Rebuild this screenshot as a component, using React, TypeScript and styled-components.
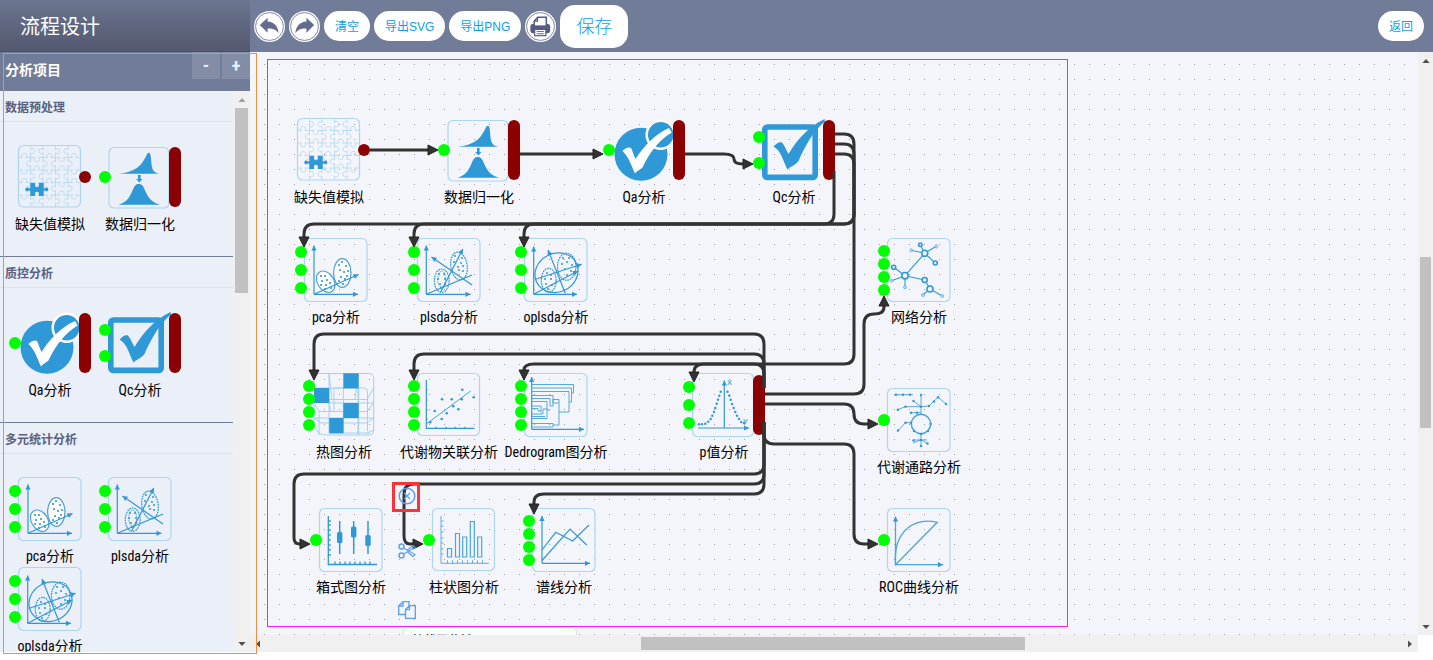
import React from 'react';
import styled, { createGlobalStyle } from 'styled-components';

const BLUE = '#2f98d6';
const PALE = '#acd6ef';
const SLATE = '#717c98';

const GlobalStyle = createGlobalStyle`
  * { box-sizing: border-box; }
  body {
    margin: 0;
    background: #fff;
    font-family: 'Roboto Condensed', Roboto, 'Noto Sans CJK SC', sans-serif;
    font-size: 14px;
    color: #000;
    overflow: hidden;
  }
  button { font-family: inherit; cursor: pointer; }
`;

const Page = styled.div`
  position: relative;
  display: flex;
  flex-direction: column;
  height: 100vh;
  padding-bottom: 8px;
`;

/* ---------- header ---------- */

const Header = styled.header`
  display: flex;
  flex: none;
  height: 52px;
  background: ${SLATE};
`;

const Brand = styled.h1`
  flex: none;
  width: 250px;
  margin: 0;
  padding-left: 20px;
  font-size: 20px;
  font-weight: 400;
  line-height: 54px;
  color: #fff;
  background: linear-gradient(#6b758f, #535970);
  border-bottom: 1px solid #4a5068;
`;

const Toolbar = styled.div`
  display: flex;
  flex: 1;
  align-items: center;
  gap: 4px;
  padding: 0 9px 0 4px;
`;

const Spacer = styled.div`
  flex: 1;
`;

const PillButton = styled.button<{ $large?: boolean }>`
  height: ${p => (p.$large ? 43 : 30)}px;
  padding: 0 ${p => (p.$large ? 16 : 11)}px 2px;
  border: 0;
  border-radius: 15px;
  background: #fff;
  color: #0aa0f0;
  font-family: 'Liberation Sans', 'Noto Sans CJK SC', sans-serif;
  font-size: ${p => (p.$large ? 18 : 12)}px;
  font-weight: ${p => (p.$large ? 300 : 400)};
  white-space: nowrap;
`;

const RoundButton = styled.button`
  display: flex;
  width: 31px;
  height: 31px;
  padding: 0;
  border: 0;
  background: none;
`;

/* ---------- sidebar ---------- */

const Body = styled.div`
  display: flex;
  flex: 1;
  min-height: 0;
`;

const Sidebar = styled.aside`
  display: flex;
  flex: none;
  flex-direction: column;
  width: 250px;
  background: #ebeff8;
`;

const PanelHead = styled.div`
  display: flex;
  flex: none;
  align-items: flex-start;
  gap: 2px;
  height: 39px;
  padding-left: 5px;
  background: ${SLATE};
`;

const PanelTitle = styled.h2`
  flex: 1;
  margin: 0;
  font-size: 14px;
  font-weight: 700;
  line-height: 37px;
  color: #fff;
`;

const FoldButton = styled.button`
  width: 28px;
  height: 27px;
  padding: 0;
  border: 0;
  background: #838da6;
  color: #e3f1fb;
  font-size: 18px;
  font-weight: 700;
  line-height: 27px;
`;

const PanelBody = styled.div`
  display: flex;
  flex: 1;
  min-height: 0;
`;

const SectionList = styled.div`
  flex: 1;
  overflow: hidden;
`;

const Section = styled.section`
  padding-bottom: 19px;
  border-bottom: 1px solid ${SLATE};
`;

const SectionTitle = styled.h3`
  margin: 0;
  padding: 4px 0 0 5px;
  border-bottom: 1px solid #dce3f0;
  font-size: 12px;
  font-weight: 700;
  line-height: 26px;
  color: #5a6080;
`;

const Tiles = styled.div`
  display: grid;
  grid-template-columns: repeat(2, 90px);
  grid-auto-rows: 90px;
  padding: 23px 0 2px 15px;
`;

const SidebarOutline = styled.div`
  position: absolute;
  top: 53px;
  left: 3px;
  bottom: 6px;
  width: 254px;
  border: 1px solid #f58a42;
  pointer-events: none;
`;

/* ---------- scrollbars ---------- */

const Track = styled.div<{ $axis: 'x' | 'y'; $size: number }>`
  display: flex;
  flex: none;
  flex-direction: ${p => (p.$axis === 'x' ? 'row' : 'column')};
  align-items: center;
  justify-content: space-between;
  ${p => (p.$axis === 'x' ? 'height' : 'width')}: ${p => p.$size}px;
  padding: ${p => (p.$axis === 'x' ? '0 4px' : '5px 0 4px')};
  background: #f0f0f0;
`;

const Rail = styled.div<{ $axis: 'x' | 'y' }>`
  display: flex;
  flex: 1;
  flex-direction: ${p => (p.$axis === 'x' ? 'row' : 'column')};
  align-self: stretch;
  margin: ${p => (p.$axis === 'x' ? '2px 7px 2px 8px' : '4px 2px')};
`;

const Before = styled.div<{ $grow: number }>`
  flex: ${p => p.$grow} 1 0;
`;

const Thumb = styled.div<{ $grow: number }>`
  flex: ${p => p.$grow} 1 0;
  background: #c1c1c1;
`;

type Dir = 'up' | 'down' | 'left' | 'right';
const turns: Record<Dir, number> = { up: 0, right: 90, down: 180, left: 270 };

const Caret = ({ dir, color = '#505050' }: { dir: Dir; color?: string }) => (
  <svg width="8" height="8" viewBox="0 0 8 8">
    <path d="M4 2 L7.6 6 H0.4 Z" fill={color} transform={`rotate(${turns[dir]} 4 4)`} />
  </svg>
);

type ScrollProps = { axis: 'x' | 'y'; size: number; parts: [number, number, number]; startColor?: string };

const Scrollbar = ({ axis, size, parts, startColor }: ScrollProps) => (
  <Track $axis={axis} $size={size}>
    <Caret dir={axis === 'x' ? 'left' : 'up'} color={startColor} />
    <Rail $axis={axis}>
      <Before $grow={parts[0]} />
      <Thumb $grow={parts[1]} />
      <Before $grow={parts[2]} />
    </Rail>
    <Caret dir={axis === 'x' ? 'right' : 'down'} />
  </Track>
);

/* ---------- canvas ---------- */

const Workspace = styled.main`
  display: flex;
  flex: 1;
  flex-direction: column;
  min-width: 0;
`;

const WorkRow = styled.div`
  display: flex;
  flex: 1;
  min-height: 0;
`;

const Canvas = styled.div`
  position: relative;
  flex: 1;
  min-width: 0;
  overflow: hidden;
  background: #f4f5fb;
`;

const Layer = styled.svg`
  position: absolute;
  inset: 0;
  width: 100%;
  height: 100%;
  pointer-events: none;
`;

const Paper = styled.div`
  position: absolute;
  top: 7px;
  left: 17px;
  width: 801px;
  height: 568px;
  border: 1px solid #ee22ee;
  pointer-events: none;
`;

const Placed = styled.div<{ $x: number; $y: number }>`
  position: absolute;
  left: ${p => p.$x}px;
  top: ${p => p.$y}px;
`;

const HoverCard = styled.div`
  position: absolute;
  top: 575px;
  left: 153px;
  width: 174px;
  padding: 3px 8px;
  border: 1px solid #dadfeb;
  border-radius: 5px;
  background: #fbfdff;
  font-size: 12px;
  font-weight: 700;
  line-height: 20px;
  color: #333a66;
`;

const LinkTool = styled.button<{ $y: number }>`
  position: absolute;
  left: 147px;
  top: ${p => p.$y}px;
  width: 20px;
  height: 20px;
  padding: 0;
  border: 0;
  background: none;
`;

const Marker = styled.div`
  position: absolute;
  left: 142px;
  top: 430px;
  width: 28px;
  height: 30px;
  border: 3px solid #fb3238;
  pointer-events: none;
`;

const HFoot = styled.div`
  display: flex;
  flex: none;
  height: 17px;
`;

const HFootBar = styled.div`
  flex: 1;
`;

const HCorner = styled.div`
  width: 15px;
`;

/* ---------- nodes ---------- */

const NodeBox = styled.div`
  position: relative;
  display: flex;
  flex-direction: column;
  align-items: center;
  width: 70px;
`;

const Art = styled.svg`
  display: block;
  flex: none;
  width: 64px;
  height: 64px;
  overflow: visible;
`;

const NodeLabel = styled.span`
  margin-top: 5px;
  line-height: 20px;
  white-space: nowrap;
`;

const gaps = [0, 0, 14, 6, 1];

const InPorts = styled.div<{ $count: number }>`
  position: absolute;
  top: 0;
  left: -6px;
  display: flex;
  flex-direction: column;
  justify-content: center;
  gap: ${p => gaps[p.$count]}px;
  height: 64px;
`;

const Port = styled.i<{ $out?: boolean }>`
  width: 12px;
  height: 12px;
  border-radius: 6px;
  background: ${p => (p.$out ? '#8b0000' : '#00ff00')};
`;

const OutPorts = styled.div`
  position: absolute;
  top: 0;
  right: -6px;
  display: flex;
  align-items: center;
  height: 64px;
`;

const PortStack = styled.i`
  width: 12px;
  height: 60px;
  border-radius: 6px;
  background: #8b0000;
`;

const Frame = ({ x = 0.5, y = 0.5, w = 62.5, h = 63 }) => (
  <rect x={x} y={y} width={w} height={h} rx="5" fill="none" stroke={PALE} strokeWidth="1.2" />
);

/* Line that ends in a filled arrow head at (x2, y2). */
const Arrow = ({ x1, y1, x2, y2 }: { x1: number; y1: number; x2: number; y2: number }) => {
  const a = (Math.atan2(y2 - y1, x2 - x1) * 180) / Math.PI;
  return (
    <g>
      <path d={`M${x1} ${y1}L${x2} ${y2}`} />
      <path d="M0 0L-5 -2.6V2.6Z" fill={BLUE} stroke="none" transform={`translate(${x2} ${y2}) rotate(${a})`} />
    </g>
  );
};

const Dots = ({ pts, r = 1 }: { pts: number[][]; r?: number }) => (
  <g fill={BLUE} stroke="none">
    {pts.map(([x, y], i) => <circle key={i} cx={x} cy={y} r={r} />)}
  </g>
);

/* Jigsaw seams: straight cuts with one round knob per piece edge. */
const puzzlePath = () => {
  const s = 12.5;
  const size = 62;
  let d = '';
  for (let k = 1; k < 5; k++) {
    for (let j = 0; j < 5; j++) {
      const v = (k + j) % 2 ? 1 : -1;
      const c = k * s;
      const a = j * s;
      const end = Math.min(a + s, size);
      d += `M${c} ${a}V${a + 4.6}c${v} -1.6 ${v * 4} -1.4 ${v * 4} 1.6s${-v * 3} 3.2 ${-v * 4} 1.6V${end}`;
      d += `M${a} ${c}H${a + 4.6}c-1.6 ${-v} -1.4 ${-v * 4} 1.6 ${-v * 4}s3.2 ${v * 3} 1.6 ${v * 4}H${end}`;
    }
  }
  return d;
};

const spots1 = [[35, 27], [38, 24], [42, 28], [36, 32], [40, 34], [44, 33], [37, 39], [41, 41], [35, 43], [43, 38], [39, 46]];
const spots2 = [[17, 38], [21, 38], [18, 43], [23, 42], [17, 47], [26, 45], [22, 47], [21, 51], [27, 50]];

const art: Record<string, React.ReactNode> = {
  puzzle: (
    <g fill="none">
      <Frame w={62} h={61.5} />
      <path d={puzzlePath()} stroke="#b3d9ef" strokeWidth="0.9" />
      <path
        d="M12.300 38H17.300C16.500 41 17.300 42.200 19 42.200S21.500 41 20.700 38H25.700V43.300H27.200C28 42 30.300 42.400 30.300 44.400S28 46.800 27.200 45.600H25.700V51H20.700C21.500 48 20.700 46.800 19 46.800S16.500 48 17.300 51H12.300V45.600H10.600C9.800 46.800 7.300 46.400 7.300 44.400S9.800 42 10.600 43.300H12.300Z"
        fill={BLUE}
      />
    </g>
  ),
  normalize: (
    <g fill={BLUE}>
      <Frame x={1} y={2.5} w={60} h={60.5} />
      <path d="M10.5 28.8C27 27 33 21 37.4 12.5C39 9 39.8 7.7 41 7.7C42.6 7.9 43 12 43.4 18C43.9 24 45 27.5 51.5 28.8Z" />
      <path d="M30 30h2.6v4h1.8L31.3 37.5 28.2 34H30Z" />
      <path d="M10.5 59.8C20 57 22.6 50 25 44.500C26.600 40.500 28 39 30.600 39C33.500 39 35 40.500 36.600 44.500C39 50 42 57 52 59.800Z" />
    </g>
  ),
  qa: (
    <g>
      <circle cx="29" cy="36.300" r="26.500" fill={BLUE} />
      <circle cx="48.700" cy="16.700" r="14" fill={BLUE} stroke="#fff" strokeWidth="2.500" />
      <path d="M10.500 33C13 30 17 28.500 19 30C21 34 22 38 23.500 41C31 29 43 16 57 10L59.800 14.500C47 22 38 34 30.500 49.500C28.500 51.500 26 52 23 55.500C19.500 48 17 39 10.500 33Z" fill="#fff" />
    </g>
  ),
  qc: (
    <g>
      <rect x="2.800" y="9" width="50.400" height="50.400" rx="2.500" fill="none" stroke={BLUE} strokeWidth="5.600" />
      <path d="M11.500 28.500C15 24.500 18 23.500 20 24.500C23 28 24 32 26.500 36C35 22 47 8 62.500 1L63 3.500C52 12 43 28 36.500 43C33 47.500 29 48 25.500 51.500C21 43 19.500 33 11.500 28.500Z" fill={BLUE} />
    </g>
  ),
  pca: (
    <g fill="none" stroke={BLUE} strokeWidth="1.200">
      <Frame />
      <ellipse cx="38.300" cy="35" rx="8.700" ry="14.300" fill="#fff" stroke="#4f9fd6" />
      <ellipse cx="21.700" cy="43.700" rx="8.200" ry="11.500" fill="#fff" stroke="#4f9fd6" transform="rotate(-32 21.700 43.700)" />
      <Dots pts={spots1} r={1.1} />
      <Dots pts={spots2} r={1.1} />
      <Arrow x1={10} y1={56.3} x2={10} y2={7.5} />
      <Arrow x1={10} y1={56.3} x2={54} y2={56.3} />
      <Arrow x1={10} y1={56.3} x2={54.5} y2={36.5} />
    </g>
  ),
  plsda: (
    <g fill="none" stroke={BLUE} strokeWidth="1.200">
      <Frame />
      <g strokeDasharray="1.800 0.800">
        <ellipse cx="24.700" cy="42.700" rx="7.400" ry="11.700" />
        <ellipse cx="42" cy="28" rx="8.200" ry="14" transform="rotate(-8 42 28)" />
        <ellipse cx="24.700" cy="41" rx="4" ry="8" opacity="0.600" />
      </g>
      <Dots pts={[[22, 36], [27, 36], [21, 41], [28, 41], [23, 46], [28, 46], [24, 50], [37, 24], [44, 25], [41, 29], [46, 28], [42, 32], [46, 33], [38, 18], [45, 20]]} />
      <Arrow x1={9.3} y1={56.3} x2={9.3} y2={7.5} />
      <Arrow x1={9.3} y1={56.3} x2={53.5} y2={56.3} />
      <path d="M9.300 56.300L55 37" />
      <Arrow x1={55} y1={47} x2={14.5} y2={19} />
      <Arrow x1={23.7} y1={54} x2={45.8} y2={11} />
    </g>
  ),
  oplsda: (
    <g fill="none" stroke={BLUE} strokeWidth="1.200">
      <Frame />
      <ellipse cx="32.500" cy="34.700" rx="22" ry="19.300" transform="rotate(-25 32.500 34.700)" />
      <g strokeDasharray="1.800 0.800">
        <ellipse cx="24.700" cy="42.300" rx="7.400" ry="12" />
        <ellipse cx="42.700" cy="28.700" rx="9.200" ry="13.500" />
      </g>
      <Dots pts={[[23, 35], [27, 37], [21, 41], [27, 41], [22, 46], [28, 47], [24, 51], [39, 20], [45, 20], [38, 26], [43, 24], [48, 27], [41, 31], [47, 33], [43, 37]]} />
      <Arrow x1={9.7} y1={56.3} x2={9.7} y2={8.5} />
      <Arrow x1={9.7} y1={56.3} x2={53} y2={56.3} />
      <Arrow x1={41.3} y1={55.3} x2={24} y2={12} />
      <Arrow x1={11.3} y1={41.3} x2={57.7} y2={26.3} />
      <Arrow x1={9.7} y1={56.3} x2={54} y2={33} />
    </g>
  ),
  heat: (
    <g fill="none" stroke="#9dcdec" strokeWidth="0.900">
      <path d="M2 15V5q0-4.500 4.500-4.500H57q4.700 0 4.700 4.500V57q0 5-4.700 5H14q-6 0-8-3L2 53V30" />
      <path d="M17 .5V60.500M31.300 15V60M46.700 15V62M2 15H46.700M17 30H61.700M2 45H61.700M17 60H58" />
      <path d="M7 38V62M22 15V38M46 15V62M55.500 19V58M17 26.500H55M7 38.500H55M9 50H55M22 15H52q3.500 0 3.500 4" />
      <path d="M17 0L20 26.500M46.700 0L43 26.500M61.700 15L55 26.500M61.700 30L55 38.500M61.700 45L55 50M2 30L7 38.500M2 45L9 50M17 30L19 38M46.700 30L43 38M61.700 57L55 60" />
      <g fill={BLUE} stroke="none">
        <rect x="31.300" y="0.300" width="15.400" height="15" />
        <rect x="2" y="15" width="15.200" height="15" />
        <rect x="31.300" y="30" width="15.400" height="15" />
        <rect x="17.200" y="45" width="14.300" height="15.300" />
      </g>
    </g>
  ),
  scatter: (
    <g fill="none" stroke={BLUE} strokeWidth="1.200">
      <Frame w={62} h={62} />
      <path d="M9.300 7V55.300H57.500M9.300 17h1.500M9.300 27h1.500M9.300 37h1.500M9.300 46h1.500M19 55.300v-1.500M29 55.300v-1.500M38 55.300v-1.500M48 55.300v-1.500" />
      <path d="M10 50.500L53.700 18" strokeWidth="0.900" />
      <Dots r={1.300} pts={[[45.3, 16.7], [56.7, 24.3], [25, 26.3], [34.7, 26.3], [44.7, 26.3], [36.3, 33.3], [41.3, 36.3], [17.7, 38], [29.7, 40.3], [24.7, 46], [13.3, 49.3]]} />
    </g>
  ),
  dendro: (
    <g fill="none" stroke={BLUE} strokeWidth="1.200">
      <Frame />
      <Arrow x1={7.7} y1={56.3} x2={7.7} y2={4} />
      <Arrow x1={7.7} y1={56.3} x2={60} y2={56.3} />
      <g strokeWidth="1" stroke="#55aade">
        <path d="M8 11.500H49.500V20H47.500M8 15H47.500V29H45M8 18.500H45V39H35M8 22.500H29V30H35M35 26.500V52M8 25.500H26V33H29V26.500H35M8 28.500H23V37H26M8 33H17V39.500M8 35.500H14V38H17M8 41H19V36H23V45.500H8M8 43.500H21M8 50.500H29V54H8M29 52H35" />
      </g>
    </g>
  ),
  pvalue: (
    <g fill="none" stroke={BLUE} strokeWidth="1.200">
      <Frame w={61} />
      <Arrow x1={32.3} y1={55} x2={32.3} y2={7.5} />
      <Arrow x1={6} y1={55} x2={57} y2={55} />
      <Dots r={1.200} pts={[[7, 51.3], [10, 51.3], [13.3, 50.7], [16.3, 48.7], [18.7, 46], [20.3, 42.7], [22, 39], [23.3, 35], [24.7, 30.7], [26, 26.7], [27.3, 22.7], [28.7, 18.7], [35.5, 18.7], [37.3, 22.7], [38.7, 26.7], [40, 31], [41.7, 35], [43.3, 39], [45, 42.7], [47, 46], [49.3, 49], [52, 50]]} />
      <g fill={BLUE} stroke="none" fontSize="8" fontFamily="Roboto, sans-serif">
        <text x="35" y="12">X</text>
        <text x="51" y="51">Y</text>
      </g>
    </g>
  ),
  network: (
    <g fill="none" stroke={BLUE} strokeWidth="1.100">
      <Frame />
      <path d="M37.700 15.300L33.300 6.700M37.700 15.300L24.300 12.300M37.700 15.300L49.300 8.300M37.700 15.300L48.300 25M37.700 15.300L18 37.700M18 37.700L6.700 29.300M18 37.700L4.700 42.700M18 37.700V49.300M18 37.700L37.700 42L43 51L36 57M43 51L55.300 58" />
      <g fill="#f4f5fb" strokeWidth="1.600">
        <circle cx="37.700" cy="15.300" r="3" />
        <circle cx="18" cy="37.700" r="3.200" />
        <circle cx="43" cy="51" r="3" />
        <circle cx="37.700" cy="42" r="2.500" />
        <circle cx="48.300" cy="25" r="2" />
        <circle cx="6.700" cy="29.300" r="2" />
        <circle cx="33.300" cy="6.700" r="1.700" />
      </g>
      <g fill="#b9dcf2" stroke="#69b4e2" strokeWidth="0.900">
        <circle cx="24.300" cy="12.300" r="1.500" />
        <circle cx="49.300" cy="8.300" r="1.500" />
        <circle cx="4.700" cy="42.700" r="1.300" />
        <circle cx="18" cy="49.300" r="1.500" />
        <circle cx="36" cy="57" r="1.500" />
        <circle cx="55.300" cy="58" r="1.500" />
      </g>
    </g>
  ),
  pathway: (
    <g fill="none" stroke="#46a2da" strokeWidth="1">
      <Frame />
      <circle cx="34" cy="36" r="9.700" strokeWidth="1.400" />
      <path d="M7 6.700H26M34 7V26.300M9.700 22.300L18 18.700H34L42 18L51 9.300L60.300 17M26.500 13L34 18.700M24 24.700H34M10.300 43.500L18.500 34.700H24.700M34 46V59M34 51.500L26 55M34 51.500L41 56M26 52H40" strokeWidth="0.900" />
      <Dots r={1.200} pts={[[9, 6.7], [16, 6.7], [23, 6.700], [34, 7], [26.500, 13], [11, 21.700], [18.500, 18.700], [24, 24.700], [30, 24.700], [51, 9.300], [59, 16], [42, 18], [47, 13.500], [11, 42.500], [18.500, 34.700], [24, 34.700], [34, 18.700], [26.500, 52.500], [34, 58], [40.500, 55.500], [43.700, 36], [27, 43], [41, 43], [34, 46], [34, 52]]} />
    </g>
  ),
  box: (
    <g fill="none" stroke={BLUE} strokeWidth="1.300">
      <Frame />
      <path d="M9.300 8V56.500H58M9.300 13h2.500M9.300 17h2.500M9.300 22h2.500M9.300 27h2.500M9.300 32h2.500M9.300 37h2.500M9.300 42h2.500M9.300 47h2.500M16 56.500v-3M21 56.500v-3M26 56.500v-3M31 56.500v-3M36 56.500v-3M41 56.500v-3M46 56.500v-3M51 56.500v-3" />
      <path d="M20.700 13V46M34.700 13V46M49 13V46" strokeWidth="1.500" />
      <g fill={BLUE} stroke="none">
        <rect x="18" y="24" width="5.400" height="11" rx="1.500" />
        <rect x="32" y="18.500" width="5.400" height="11" rx="1.500" />
        <rect x="46.300" y="27" width="5.400" height="11" rx="1.500" />
      </g>
    </g>
  ),
  bar: (
    <g fill="none" stroke="#4ba6dc" strokeWidth="1.200">
      <Frame w={62} h={62} />
      <path d="M9 8V55.300H57M9 13h2.500M9 18h2.500M9 24h2.500M9 30h2.500M9 35h2.500M9 41h2.500M9 46h2.500M15.500 55.300v-3M20.500 55.300v-3M25.500 55.300v-3M30.500 55.300v-3M35.500 55.300v-3M40.500 55.300v-3M45.500 55.300v-3M50.500 55.300v-3" strokeWidth="0.900" />
      <path d="M15.500 49V40.500h4V49ZM23.500 49V25.500h4V49ZM30.700 49V29h4V49ZM38.300 49V13.500h4V49ZM45.700 49V29h4V49Z" />
    </g>
  ),
  line: (
    <g fill="none" stroke={BLUE} strokeWidth="1.200">
      <Frame />
      <Arrow x1={10} y1={55.3} x2={10} y2={8} />
      <Arrow x1={10} y1={55.3} x2={58} y2={55.3} />
      <path d="M10 42L23.700 24.300L40.700 33L57 17M10 52.500L38 21L54.700 37" />
    </g>
  ),
  roc: (
    <g fill="none" stroke="#4ba6dc" strokeWidth="1.300">
      <Frame />
      <Arrow x1={8.5} y1={56.7} x2={8.5} y2={8.5} />
      <Arrow x1={8.5} y1={56.7} x2={56} y2={56.7} />
      <path d="M8.500 56.700L50.300 14.300C29 9.500 6 21 8.500 56.700Z" />
    </g>
  ),
};

type Kind = { icon: string; label: string; ins: number; out?: 'one' | 'many' };

const kinds: Record<string, Kind> = {
  missing: { icon: 'puzzle', label: '缺失值模拟', ins: 0, out: 'one' },
  normalize: { icon: 'normalize', label: '数据归一化', ins: 1, out: 'many' },
  qa: { icon: 'qa', label: 'Qa分析', ins: 1, out: 'many' },
  qc: { icon: 'qc', label: 'Qc分析', ins: 2, out: 'many' },
  pca: { icon: 'pca', label: 'pca分析', ins: 3 },
  plsda: { icon: 'plsda', label: 'plsda分析', ins: 3 },
  oplsda: { icon: 'oplsda', label: 'oplsda分析', ins: 3 },
  network: { icon: 'network', label: '网络分析', ins: 4 },
  heat: { icon: 'heat', label: '热图分析', ins: 4 },
  relation: { icon: 'scatter', label: '代谢物关联分析', ins: 4 },
  dendro: { icon: 'dendro', label: 'Dedrogram图分析', ins: 4 },
  pvalue: { icon: 'pvalue', label: 'p值分析', ins: 3, out: 'many' },
  pathway: { icon: 'pathway', label: '代谢通路分析', ins: 1 },
  box: { icon: 'box', label: '箱式图分析', ins: 1 },
  bar: { icon: 'bar', label: '柱状图分析', ins: 1 },
  line: { icon: 'line', label: '谱线分析', ins: 4 },
  roc: { icon: 'roc', label: 'ROC曲线分析', ins: 1 },
};

const FlowNode = ({ kind }: { kind: string }) => {
  const k = kinds[kind];
  return (
    <NodeBox>
      <Art viewBox="0 0 64 64">{art[k.icon]}</Art>
      <InPorts $count={k.ins}>
        {Array.from({ length: k.ins }, (_, i) => <Port key={i} />)}
      </InPorts>
      {k.out && <OutPorts>{k.out === 'one' ? <Port $out /> : <PortStack />}</OutPorts>}
      <NodeLabel>{k.label}</NodeLabel>
    </NodeBox>
  );
};

/* Canvas positions: left port column and top edge of each node. */
const placed: [string, number, number][] = [
  ['missing', 44, 66], ['normalize', 194, 66], ['qa', 359, 66], ['qc', 509, 66],
  ['pca', 51, 186], ['plsda', 164, 186], ['oplsda', 271, 186], ['network', 634, 186],
  ['heat', 59, 321], ['relation', 164, 321], ['dendro', 271, 321], ['pvalue', 439, 321],
  ['pathway', 634, 336],
  ['box', 66, 456], ['bar', 179, 456], ['line', 279, 456], ['roc', 634, 456],
];

const links = [
  'M120 98H179',
  'M270 102H343',
  'M435 102H474Q484 102 484 107Q484 112 493 112H494',
  'M585 82H594Q604 82 604 92V162Q604 172 594 172H64Q54 172 54 182V186',
  'M585 92H594Q604 92 604 102V162Q604 172 594 172H174Q164 172 164 182V186',
  'M584 119V162Q584 172 574 172H284Q274 172 274 182V186',
  'M585 102H594Q604 102 604 112V302Q604 312 594 312H454Q444 312 444 320V321',
  'M514 336V292Q514 282 504 282H74Q64 282 64 292V319',
  'M514 336V312Q514 302 504 302H174Q164 302 164 312V319',
  'M514 336V322Q514 312 504 312H284Q274 312 274 318V319',
  'M515 342H604Q614 342 614 332V272Q614 262 624 262Q634 262 634 255V254',
  'M515 352H594Q604 352 604 362Q604 372 614 372H618',
  'M514 370V382Q514 392 524 392H594Q604 392 604 402V482Q604 492 614 492H618',
  'M514 370V412Q514 422 504 422H54Q44 422 44 432V486Q44 492 50 492',
  'M514 370V422Q514 432 504 432H164Q154 432 154 442V484Q154 492 160 492H164',
  'M514 370V432Q514 442 504 442H294Q284 442 284 450V453',
];

/* Arrow heads: tip x, tip y, direction in degrees. */
const tips: [number, number, number][] = [
  [188, 98, 0], [353, 102, 0], [503, 112, 0],
  [54, 195, 90], [164, 195, 90], [274, 195, 90], [444, 330, 90],
  [64, 328, 90], [164, 328, 90], [274, 328, 90],
  [634, 244, 270], [628, 372, 0], [628, 492, 0],
  [60, 492, 0], [173, 492, 0], [284, 462, 90],
];

const sections = [
  { title: '数据预处理', items: ['missing', 'normalize'] },
  { title: '质控分析', items: ['qa', 'qc'] },
  { title: '多元统计分析', items: ['pca', 'plsda', 'oplsda'] },
];

const Disc = ({ children }: { children: React.ReactNode }) => (
  <svg width="31" height="31" viewBox="0 0 32 32">
    <circle cx="16" cy="16" r="16" fill="#fff" />
    <circle cx="16" cy="16" r="14.400" fill="none" stroke="#7b84a0" strokeWidth="1" />
    {children}
  </svg>
);

const ArrowGlyph = ({ flip }: { flip?: boolean }) => (
  <path
    d="M6 14.500L14 7V10.800C20.500 11 24.800 15.500 25.500 23C22.500 19 19 18 14 18.200V22.500Z"
    fill="#666b8e"
    transform={flip ? 'translate(32 0) scale(-1 1)' : undefined}
  />
);

const PrinterGlyph = () => (
  <g>
    <rect x="5.500" y="13.500" width="20.500" height="9.500" rx="2.500" fill="#555b80" />
    <path d="M9.500 16V10.500L13 6.500H22V16Z" fill="#fff" stroke="#555b80" strokeWidth="1.600" />
    <path d="M9.500 10.500H13V6.500" fill="none" stroke="#555b80" strokeWidth="1.200" />
    <rect x="6.500" y="15" width="18.500" height="3" fill="#555b80" />
    <rect x="10" y="19" width="11.500" height="6.500" fill="#fff" stroke="#555b80" strokeWidth="1.200" />
    <path d="M12 21.200H19.500M12 23.500H19.500" stroke="#555b80" strokeWidth="0.900" />
  </g>
);

const App = () => (
  <Page>
    <GlobalStyle />
    <Header>
      <Brand>流程设计</Brand>
      <Toolbar>
        <RoundButton aria-label="撤销"><Disc><ArrowGlyph /></Disc></RoundButton>
        <RoundButton aria-label="重做"><Disc><ArrowGlyph flip /></Disc></RoundButton>
        <PillButton>清空</PillButton>
        <PillButton>导出SVG</PillButton>
        <PillButton>导出PNG</PillButton>
        <RoundButton aria-label="打印"><Disc><PrinterGlyph /></Disc></RoundButton>
        <PillButton $large>保存</PillButton>
        <Spacer />
        <PillButton>返回</PillButton>
      </Toolbar>
    </Header>
    <Body>
      <Sidebar>
        <PanelHead>
          <PanelTitle>分析项目</PanelTitle>
          <FoldButton>-</FoldButton>
          <FoldButton>+</FoldButton>
        </PanelHead>
        <PanelBody>
          <SectionList>
            {sections.map(s => (
              <Section key={s.title}>
                <SectionTitle>{s.title}</SectionTitle>
                <Tiles>
                  {s.items.map(i => <FlowNode key={i} kind={i} />)}
                </Tiles>
              </Section>
            ))}
          </SectionList>
          <Scrollbar axis="y" size={17} parts={[0, 185, 342]} startColor="#a0a0a0" />
        </PanelBody>
      </Sidebar>
      <Workspace>
        <WorkRow>
          <Canvas>
            <Layer>
              <defs>
                <pattern id="grid" x="14" y="12" width="15" height="15" patternUnits="userSpaceOnUse">
                  <rect width="1" height="1" fill="#a0a1a8" />
                </pattern>
              </defs>
              <rect width="100%" height="100%" fill="url(#grid)" />
            </Layer>
            {placed.map(([kind, x, y]) => (
              <Placed key={kind} $x={x} $y={y}>
                <FlowNode kind={kind} />
              </Placed>
            ))}
            <Layer>
              <g fill="none" stroke="#333" strokeWidth="3">
                {links.map(d => <path key={d} d={d} />)}
              </g>
              <g fill="#333" stroke="#222" strokeWidth="1">
                {tips.map(([x, y, a]) => (
                  <path key={`${x}-${y}`} d="M0 0L-10 -5V5Z" transform={`translate(${x} ${y}) rotate(${a})`} />
                ))}
              </g>
            </Layer>
            <HoverCard>柱状图分析</HoverCard>
            <LinkTool $y={434} aria-label="删除连线">
              <svg width="20" height="20" viewBox="0 0 20 20" fill="none" stroke="#5b9fee" strokeWidth="1.500">
                <circle cx="10" cy="10" r="7.800" />
                <path d="M7 7L13 13M13 7L7 13" strokeWidth="1.100" />
              </svg>
            </LinkTool>
            <LinkTool $y={489} aria-label="剪断连线">
              <svg width="20" height="20" viewBox="0 0 20 20" fill="none" stroke="#5b9fee" strokeWidth="1.400">
                <circle cx="4.500" cy="5.500" r="2.500" />
                <circle cx="4.500" cy="14.500" r="2.500" />
                <path d="M6.500 7L18 13.500L16 15.500L10 10.500M6.500 13L18 6.500L16 4.500L10 9.500" strokeWidth="1.100" />
              </svg>
            </LinkTool>
            <LinkTool $y={548} aria-label="复制">
              <svg width="20" height="20" viewBox="0 0 20 20" fill="none" stroke="#5b9fee" strokeWidth="1.300">
                <path d="M8 14.500H1.700V6L6 1.700H12V6M6 2V6H2" />
                <path d="M8.500 18.300V9.500L12.500 5.700H18.300V18.300ZM12.500 6V9.700H9" />
              </svg>
            </LinkTool>
            <Marker />
            <Paper />
          </Canvas>
          <Scrollbar axis="y" size={15} parts={[188, 171, 191]} />
        </WorkRow>
        <HFoot>
          <HFootBar>
            <Scrollbar axis="x" size={17} parts={[371, 385, 374]} />
          </HFootBar>
          <HCorner />
        </HFoot>
      </Workspace>
    </Body>
    <SidebarOutline />
  </Page>
);

export default App;
